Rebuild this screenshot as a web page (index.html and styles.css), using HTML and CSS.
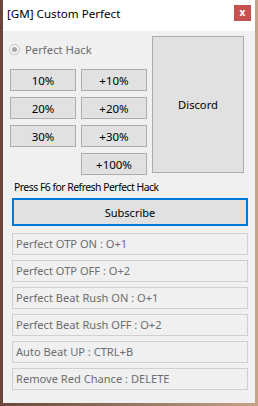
FILE: index.html
```html
<!DOCTYPE html>
<html lang="en">
<head>
  <meta charset="UTF-8" />
  <title>[GM] Custom Perfect</title>
  <link rel="stylesheet" href="styles.css">
</head>
<body>
  <div class="window">
    <div class="title-bar">
      <span class="title">[GM] Custom Perfect</span>
      <span class="close">x</span>
    </div>

    <div class="client">
      <div class="top-row">
        <div class="left-col">
          <label class="radio">
            <span class="radio-dot"></span>
            Perfect Hack
          </label>
          <div class="btn-grid">
            <button class="btn">10%</button>
            <button class="btn">+10%</button>
            <button class="btn">20%</button>
            <button class="btn">+20%</button>
            <button class="btn">30%</button>
            <button class="btn">+30%</button>
            <button class="btn btn-right">+100%</button>
          </div>
        </div>
        <button class="btn discord">Discord</button>
      </div>

      <div class="lower">
        <div class="hint">Press F6 for Refresh Perfect Hack</div>
        <button class="btn subscribe">Subscribe</button>
        <div class="keys">
          <div class="key-box">Perfect OTP ON : O+1</div>
          <div class="key-box">Perfect OTP OFF : O+2</div>
          <div class="key-box">Perfect Beat Rush ON : O+1</div>
          <div class="key-box">Perfect Beat Rush OFF : O+2</div>
          <div class="key-box">Auto Beat UP : CTRL+B</div>
          <div class="key-box">Remove Red Chance : DELETE</div>
        </div>
      </div>
    </div>
  </div>
</body>
</html>
```

FILE: styles.css
```css
* {
  margin: 0;
  padding: 0;
  box-sizing: border-box;
}

body {
  width: 258px;
  height: 406px;
  overflow: hidden;
  font-family: "Segoe UI", "Noto Sans", sans-serif;
  font-size: 12px;
  color: #000;
  background: linear-gradient(90deg, #6a463c 0%, #8a6a5a 40%, #c4a387 100%);
}

.window {
  margin-left: 3px;
  width: 252px;
  height: 403px;
  background: #f0f0f0;
  display: flex;
  flex-direction: column;
}

.title-bar {
  height: 31px;
  background: #fff;
  display: flex;
  align-items: flex-start;
  justify-content: space-between;
  padding: 6px 4px 0 4px;
}

.title {
  font-size: 11.6px;
  line-height: 16px;
}

.close {
  width: 17px;
  height: 16px;
  margin-top: -1px;
  background: #c75050;
  color: #fff;
  font-weight: bold;
  font-size: 10px;
  line-height: 15px;
  text-align: center;
}

.client {
  flex: 1;
  padding: 5px 0 0 7px;
}

.top-row {
  display: flex;
  gap: 5px;
}

.left-col {
  width: 137px;
}

.radio {
  display: flex;
  align-items: center;
  gap: 5px;
  height: 26px;
  margin-bottom: 7px;
  padding-top: 1px;
  color: #6d6d6d;
  font-size: 11.3px;
}

.radio-dot {
  width: 11px;
  height: 11px;
  margin-left: -1px;
  border-radius: 50%;
  border: 1px solid #c4c4c4;
  background: #f4f4f4;
  position: relative;
}

.radio-dot::after {
  content: "";
  position: absolute;
  left: 2px;
  top: 2px;
  width: 5px;
  height: 5px;
  border-radius: 50%;
  background: #a8a8a8;
}

.btn-grid {
  display: grid;
  grid-template-columns: 66px 66px;
  gap: 6px 5px;
}

.btn {
  height: 22px;
  background: #e1e1e1;
  border: 1px solid #adadad;
  font-family: inherit;
  font-size: 11.5px;
  color: #000;
}

.btn-right {
  grid-column: 2;
}

.discord {
  width: 92px;
  height: 137px;
  font-size: 11.2px;
}

.lower {
  padding-left: 2px;
  width: 238px;
}

.hint {
  padding-left: 2px;
  margin-top: 2px;
  height: 21px;
  line-height: 20px;
  font-size: 10.4px;
  letter-spacing: -0.5px;
}

.subscribe {
  width: 236px;
  height: 28px;
  border: 2px solid #0078d7;
  margin-bottom: 7px;
  font-size: 11px;
}

.keys {
  display: flex;
  flex-direction: column;
  gap: 5px;
  width: 236px;
}

.key-box {
  height: 22px;
  border: 1px solid #d0d0d0;
  background: #f0f0f0;
  color: #6d6d6d;
  padding-left: 3px;
  line-height: 20px;
  font-size: 11.1px;
}
```
